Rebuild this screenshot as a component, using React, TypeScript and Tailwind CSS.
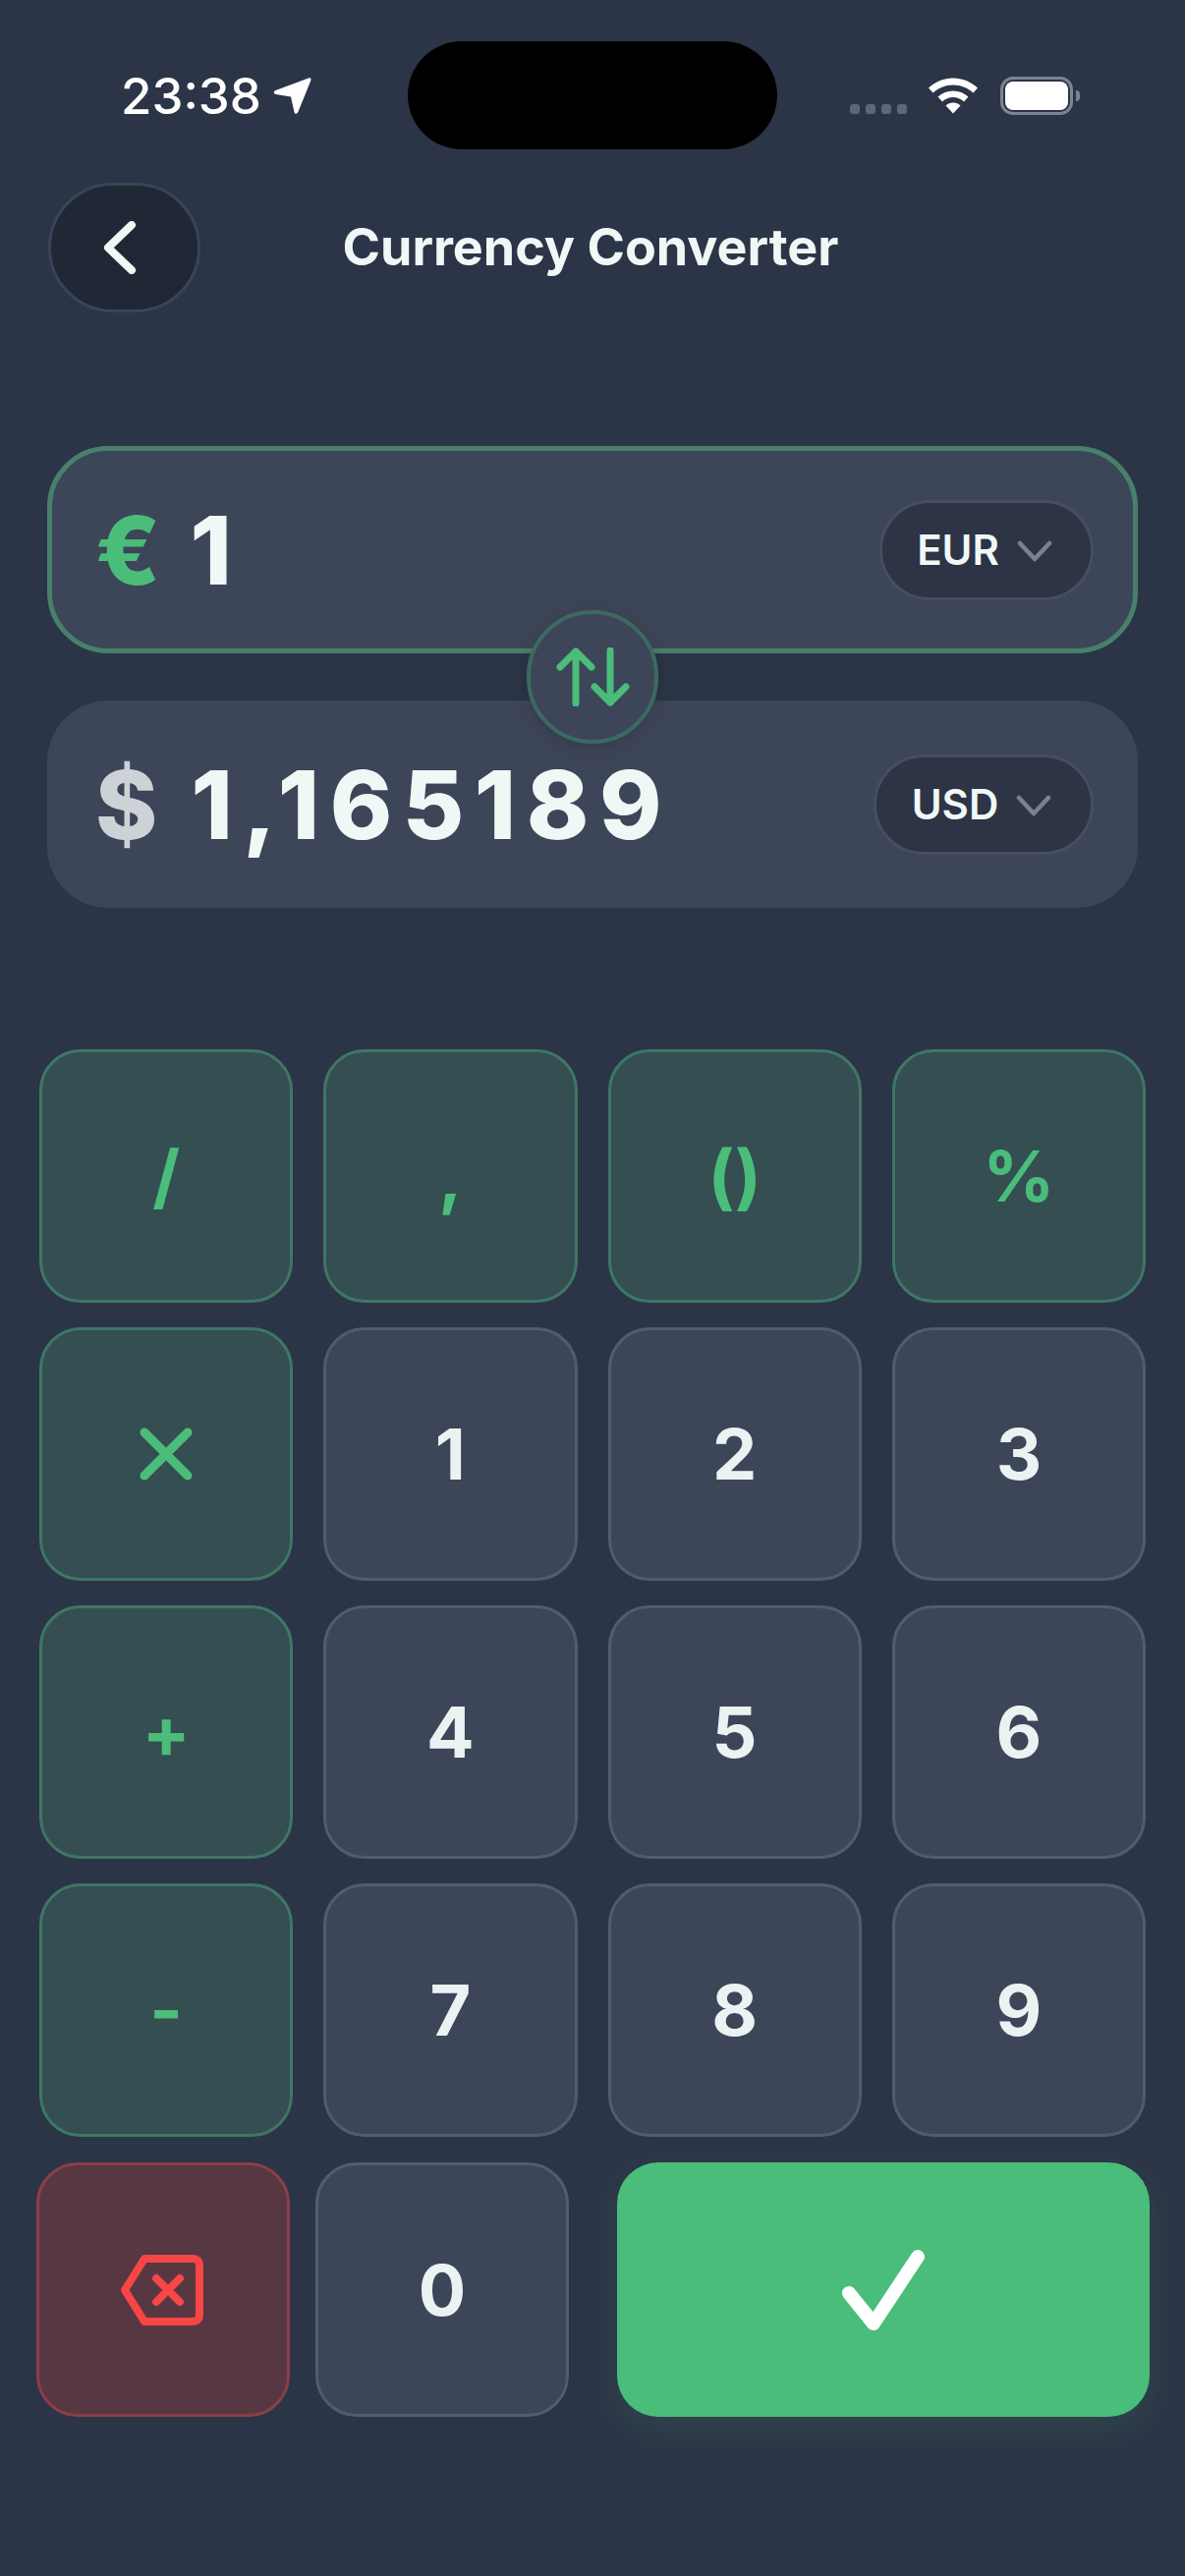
import React from "react";

const font = { fontFamily: "Inter, 'Liberation Sans', sans-serif" };

function Chevron({ className }: { className?: string }) {
  return (
    <svg viewBox="0 0 36 24" className={className} fill="none" stroke="#7b818e" strokeWidth="4.5" strokeLinecap="round" strokeLinejoin="round">
      <path d="M3 4 L18 20 L33 4" />
    </svg>
  );
}

function CurrencyPill({ code, width }: { code: string; width: string }) {
  return (
    <div className={`flex h-[102px] items-center justify-center gap-[18px] rounded-[51px] border-[3px] border-[#464e60] bg-[#2c3446] pr-[4px] ${width}`}>
      <span className="text-[42px] font-semibold leading-none text-[#f0f8f6]">{code}</span>
      <Chevron className="mt-[2px] h-[24px] w-[36px]" />
    </div>
  );
}

function OpKey({ children }: { children: React.ReactNode }) {
  return (
    <div className="flex h-[258px] items-center justify-center rounded-[42px] border-[3px] border-[#3e7765] bg-[#344e51] text-[72px] font-[650] leading-none text-[#4abd7a]">
      {children}
    </div>
  );
}

function NumKey({ children, className = "h-[258px]" }: { children: React.ReactNode; className?: string }) {
  return (
    <div className={`flex items-center justify-center rounded-[42px] border-[3px] border-[#545b6d] bg-[#3d4558] text-[72px] font-[650] leading-none text-[#eaf3f2] ${className}`}>
      {children}
    </div>
  );
}

export default function App() {
  return (
    <div style={font} className="relative flex h-[2622px] w-[1206px] flex-col overflow-hidden bg-[#2c3547]">
      {/* status bar */}
      <div className="mt-[42px] flex h-[110px] items-center pl-[123px] pr-[107px]">
        <div className="flex w-[292px] items-center gap-[12px]">
          <span className="text-[51px] font-medium leading-none text-white">23:38</span>
          <svg viewBox="0 0 40 40" className="h-[39px] w-[39px]" fill="white">
            <path d="M37 1.5 C38.8 0.8 40 2 39.4 3.8 L26 37 C25 39.3 22.3 39 22 36.8 L18.5 21 L3 18.5 C0.5 18 0 15.3 2.5 14.3 Z" />
          </svg>
        </div>
        <div className="h-[110px] w-[376px] rounded-[55px] bg-black" />
        <div className="flex w-[308px] items-center justify-end">
          <div className="mr-[22px] mt-[28px] flex gap-[6px]">
            {[0, 1, 2, 3].map((i) => (
              <div key={i} className="h-[10px] w-[10px] rounded-[3px] bg-[#5f6675]" />
            ))}
          </div>
          <svg viewBox="0 0 50 36" className="mr-[23px] h-[37px] w-[50px]" fill="white">
            <path d="M25 0 C34 0 43 3.5 50 10 L45.5 15 C40 10 33 7 25 7 C17 7 10 10 4.5 15 L0 10 C7 3.5 16 0 25 0 Z" />
            <path d="M25 13 C31 13 36 15 40.5 19 L36 24 C33 21 29 19.5 25 19.5 C21 19.5 17 21 14 24 L9.5 19 C14 15 19 13 25 13 Z" />
            <path d="M25 25 C28 25 30.5 26 32.5 28 L25 36 L17.5 28 C19.5 26 22 25 25 25 Z" />
          </svg>
          <div className="flex items-center">
            <div className="flex h-[39px] w-[74px] items-center justify-center rounded-[13px] border-[3px] border-[#7c8391] p-[2px]">
              <div className="h-full w-full rounded-[8px] bg-white" />
            </div>
            <div className="ml-[3px] h-[11px] w-[4px] rounded-r-[4px] bg-[#7c8391]" />
          </div>
        </div>
      </div>

      {/* header */}
      <div className="mt-[34px] grid grid-cols-[1fr_auto_1fr] items-center pl-[49px] pr-[53px]">
        <div className="flex h-[132px] w-[155px] items-center justify-center rounded-[66px] border-[3px] border-[#3a4458] bg-[#202735]">
          <svg viewBox="0 0 34 54" className="-ml-[9px] h-[54px] w-[34px]" fill="none" stroke="#f0f8f6" strokeWidth="8" strokeLinecap="round" strokeLinejoin="round">
            <path d="M29 4 L5 27 L29 50" />
          </svg>
        </div>
        <h1 className="text-[52px] font-bold leading-none text-[#f0f8f6]">Currency Converter</h1>
        <div />
      </div>

      {/* cards */}
      <div className="relative mt-[136px] flex flex-col gap-[48px] px-[48px]">
        <div className="flex h-[211px] items-center justify-between rounded-[62px] border-[5px] border-[#47806c] bg-[#3d4558] pl-[44px] pr-[40px]">
          <div className="flex items-center gap-[30px] text-[96px] font-extrabold leading-none">
            <span className="text-[#4abd7a]">€</span>
            <span className="text-[#f0f8f6]">1</span>
          </div>
          <CurrencyPill code="EUR" width="w-[218px]" />
        </div>
        <div className="flex h-[211px] items-center justify-between rounded-[62px] bg-[#3d4558] pl-[49px] pr-[45px]">
          <div className="flex items-center gap-[34px] text-[96px] font-extrabold leading-none">
            <span className="text-[#cdd2d7]">$</span>
            <span className="tracking-[10.5px] text-[#f0f8f6]">1,165189</span>
          </div>
          <CurrencyPill code="USD" width="w-[224px]" />
        </div>
        <div className="absolute left-[536px] top-[167px] flex h-[136px] w-[134px] items-center justify-center rounded-full border-[4px] border-[#3c6a60] bg-[#3d4558] shadow-[0_4px_20px_rgba(0,0,0,0.15)]">
          <svg viewBox="0 0 75 60" className="h-[60px] w-[75px]" fill="none" stroke="#4abd7a" strokeWidth="7" strokeLinecap="round" strokeLinejoin="round">
            <path d="M20 57 V4 M4 20 L20 4 L36 20" />
            <path d="M55 3 V56 M39 40 L55 56 L71 40" />
          </svg>
        </div>
      </div>

      {/* keypad */}
      <div className="mt-[144px] flex flex-col gap-[25px] px-[40px]">
        <div className="grid grid-cols-4 gap-[31px]">
          <OpKey>/</OpKey>
          <OpKey>,</OpKey>
          <OpKey>()</OpKey>
          <OpKey>%</OpKey>
        </div>
        <div className="grid grid-cols-4 gap-[31px]">
          <OpKey>
            <svg viewBox="0 0 54 54" className="h-[54px] w-[54px]" fill="none" stroke="#4abd7a" strokeWidth="9" strokeLinecap="round">
              <path d="M5 5 L49 49 M49 5 L5 49" />
            </svg>
          </OpKey>
          <NumKey>1</NumKey>
          <NumKey>2</NumKey>
          <NumKey>3</NumKey>
        </div>
        <div className="grid grid-cols-4 gap-[31px]">
          <OpKey>+</OpKey>
          <NumKey>4</NumKey>
          <NumKey>5</NumKey>
          <NumKey>6</NumKey>
        </div>
        <div className="grid grid-cols-4 gap-[31px]">
          <OpKey>-</OpKey>
          <NumKey>7</NumKey>
          <NumKey>8</NumKey>
          <NumKey>9</NumKey>
        </div>
      </div>
      <div className="mt-[26px] flex pl-[37px]">
        <div className="flex h-[259px] w-[258px] items-center justify-center rounded-[42px] border-[3px] border-[#8a3f48] bg-[#573742]">
          <svg viewBox="0 0 84 72" className="-ml-[2px] h-[72px] w-[84px]" fill="none" stroke="#f84545" strokeWidth="8" strokeLinecap="round" strokeLinejoin="round">
            <path d="M24 4 H74 C77 4 80 7 80 10 V62 C80 65 77 68 74 68 H24 L4 36 Z" />
            <path d="M36 24 L60 48 M60 24 L36 48" />
          </svg>
        </div>
        <NumKey className="ml-[26px] h-[259px] w-[258px]">0</NumKey>
        <div className="ml-[49px] flex h-[259px] w-[542px] items-center justify-center rounded-[42px] bg-[#4abd7a] shadow-[0_12px_32px_rgba(74,189,122,0.12)]">
          <svg viewBox="0 0 86 82" className="h-[82px] w-[86px]" fill="none" stroke="white" strokeWidth="14" strokeLinecap="round" strokeLinejoin="round">
            <path d="M8 44 L33 75 L78 7" />
          </svg>
        </div>
      </div>
    </div>
  );
}
